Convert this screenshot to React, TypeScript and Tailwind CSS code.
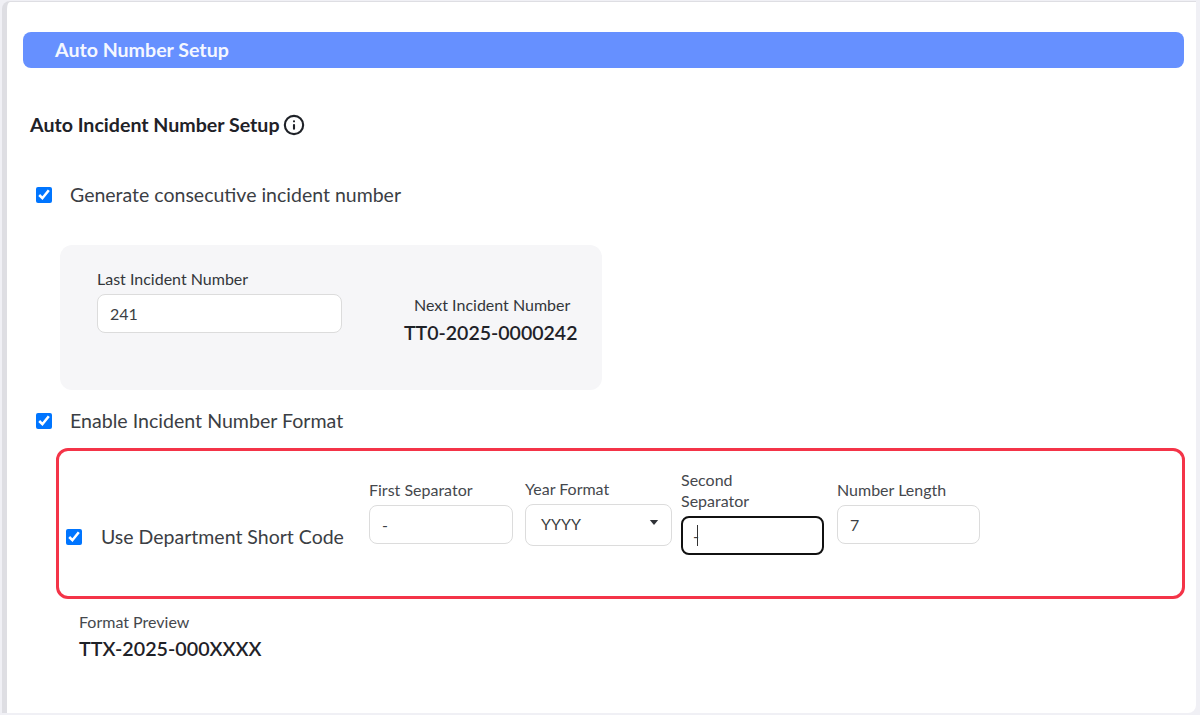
import { Info } from "lucide-react";

function Check() {
  return (
    <input
      type="checkbox"
      defaultChecked
      className="m-0 h-[16px] w-[16px] shrink-0 accent-[#0075ff]"
    />
  );
}

function TextField({ value, className }: { value: string; className: string }) {
  return (
    <input
      readOnly
      defaultValue={value}
      className={`block rounded-[8px] border border-[#dcdcdc] bg-white text-[16px] leading-[20px] text-[#3c3f44] outline-none ${className}`}
    />
  );
}

export default function App() {
  return (
    <div className="h-[715px] w-[1200px] overflow-hidden bg-[#f0f0f5] pl-[2px] pt-[1px] font-['Lato',sans-serif]">
      <div className="h-[712px] w-[1194px] rounded-br-[8px] rounded-tl-[8px] border-l-[5px] border-t border-[#dedee3] bg-white pl-[16px] pt-[30px]">
        <div className="flex h-[36px] w-[1161px] items-center rounded-[8px] bg-[#6690ff] pb-[1px] pl-[32px] text-[19.6px] font-bold text-[#f4f7ff]">
          Auto Number Setup
        </div>

        <div className="ml-[7px] mt-[45px] flex h-[24px] items-center gap-[3px] text-[19.6px] font-bold text-[#1f2228]">
          Auto Incident Number Setup
          <Info className="h-[22px] w-[22px]" strokeWidth={2.3} />
        </div>

        <div className="ml-[13px] mt-[46px] flex h-[24px] items-center gap-[18px] text-[19.5px] text-[#3b3e44]">
          <Check />
          Generate consecutive incident number
        </div>

        <div className="ml-[37px] mt-[38px] flex h-[145px] w-[542px] rounded-[12px] bg-[#f6f6f8] pl-[37px] pt-[24px]">
          <div className="w-[245px]">
            <div className="h-[20px] text-[16px] leading-[20px] text-[#33363b]">Last Incident Number</div>
            <TextField value="241" className="mt-[5px] h-[39px] w-[245px] pl-[12px]" />
          </div>
          <div className="ml-[62px] pt-[26px]">
            <div className="pl-[10px] text-[16px] leading-[20px] text-[#33363b]">Next Incident Number</div>
            <div className="mt-[6px] text-[19.5px] font-semibold leading-[24px] text-[#1f2228]">TT0-2025-0000242</div>
          </div>
        </div>

        <div className="ml-[13px] mt-[19px] flex h-[24px] items-center gap-[18px] text-[19.6px] text-[#3b3e44]">
          <Check />
          Enable Incident Number Format
        </div>

        <div className="ml-[33px] mt-[15px] flex h-[151px] w-[1129px] items-start rounded-[12px] border-[3px] border-[#f43448] pl-[7px]">
          <div className="mt-[74px] flex h-[24px] w-[278px] items-center gap-[19px] text-[19.5px] text-[#3b3e44]">
            <Check />
            Use Department Short Code
          </div>
          <div className="ml-[25px] mt-[29px] w-[144px]">
            <div className="h-[20px] text-[16px] leading-[20px] text-[#45484d]">First Separator</div>
            <TextField value="-" className="mt-[5px] h-[39px] w-[144px] pl-[12px]" />
          </div>
          <div className="ml-[12px] mt-[28px] w-[147px]">
            <div className="h-[20px] text-[16px] leading-[20px] text-[#45484d]">Year Format</div>
            <div className="mt-[5px] flex h-[42px] w-[147px] items-center justify-between rounded-[8px] border border-[#dcdcdc] bg-white pb-[3px] pl-[15px] pr-[12px] text-[16px] text-[#3c3f44]">
              YYYY
              <svg viewBox="0 0 10 6" className="mb-[2px] h-[5px] w-[10px]" fill="#2f3237">
                <path d="M0 0h10L5 6z" />
              </svg>
            </div>
          </div>
          <div className="ml-[9px] mt-[18px] w-[143px]">
            <div className="text-[16px] leading-[21px] text-[#45484d]">
              Second
              <br />
              Separator
            </div>
            <div className="relative mt-[5px]">
              <input
                readOnly
                defaultValue="-"
                className="block h-[39px] w-[143px] rounded-[8px] border-2 border-[#111] bg-white pl-[10px] text-[16px] text-[#3c3f44] outline-none"
              />
              <span className="absolute left-[16px] top-[9px] h-[21px] w-px bg-[#333]" />
            </div>
          </div>
          <div className="ml-[13px] mt-[29px] w-[143px]">
            <div className="h-[20px] text-[16px] leading-[20px] text-[#45484d]">Number Length</div>
            <TextField value="7" className="mt-[5px] h-[39px] w-[143px] pl-[12px]" />
          </div>
        </div>

        <div className="ml-[56px] mt-[13px] text-[16px] leading-[20px] text-[#45484d]">Format Preview</div>
        <div className="ml-[56px] mt-[5px] text-[19.7px] font-semibold leading-[24px] text-[#1f2228]">TTX-2025-000XXXX</div>
      </div>
    </div>
  );
}
